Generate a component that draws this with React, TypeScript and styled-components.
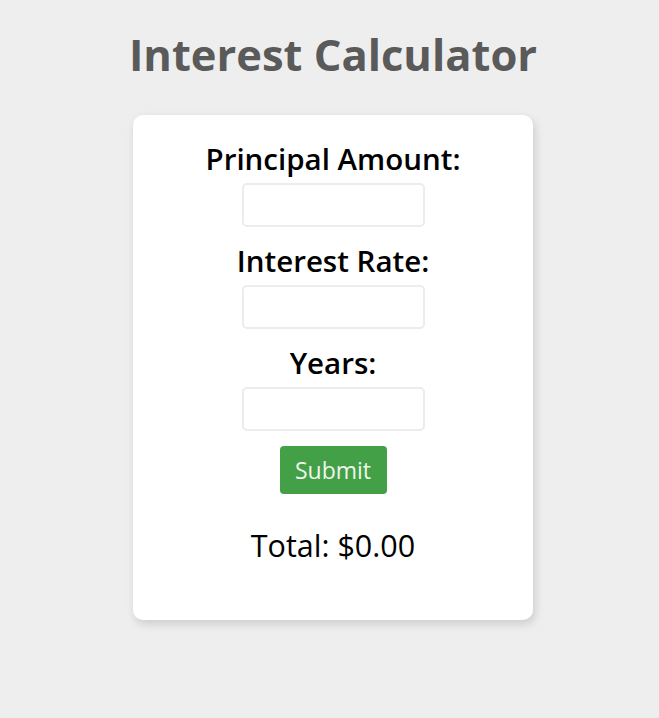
import React from "react";
import styled, { createGlobalStyle } from "styled-components";

const Global = createGlobalStyle`
  html, body { margin: 0; padding: 0; background: #eeeeee; }
  body { font-family: "Open Sans", "Noto Sans", sans-serif; }
`;

const Page = styled.div`
  display: flex;
  flex-direction: column;
  align-items: center;
  padding: 26px 0 40px 7px;
`;

const Title = styled.h1`
  margin: 0 0 31px;
  font-size: 43.5px;
  line-height: 58px;
  font-weight: 700;
  color: #5a5a5a;
`;

const Card = styled.form`
  width: 400px;
  box-sizing: border-box;
  background: #ffffff;
  border-radius: 10px;
  box-shadow: 2px 4px 10px rgba(0, 0, 0, 0.14);
  padding: 26px 0 58px;
  display: flex;
  flex-direction: column;
  align-items: center;
`;

const Field = styled.div`
  display: flex;
  flex-direction: column;
  align-items: center;
  gap: 6px;
  margin-bottom: 16px;
`;

const Label = styled.label`
  font-size: 29.5px;
  line-height: 36px;
  font-weight: 600;
  color: #000;
`;

const Input = styled.input`
  width: 183px;
  height: 44px;
  box-sizing: border-box;
  border: 2px solid #ececec;
  border-radius: 5px;
  background: #fff;
  outline: none;
  font-family: inherit;
  font-size: 18px;
  padding: 0 8px;
`;

const Button = styled.button`
  margin-top: -1px;
  width: 107px;
  height: 48px;
  border: none;
  border-radius: 4px;
  background: #43a047;
  color: #eef6ee;
  font-family: inherit;
  font-size: 23px;
  cursor: pointer;
`;

const Total = styled.p`
  margin: 34px 0 0;
  font-size: 30.5px;
  line-height: 34px;
  color: #000;
`;

export default function App() {
  return (
    <>
      <Global />
      <Page>
        <Title>Interest Calculator</Title>
        <Card onSubmit={(e) => e.preventDefault()}>
          <Field>
            <Label htmlFor="principal">Principal Amount:</Label>
            <Input id="principal" type="text" />
          </Field>
          <Field>
            <Label htmlFor="rate">Interest Rate:</Label>
            <Input id="rate" type="text" />
          </Field>
          <Field>
            <Label htmlFor="years">Years:</Label>
            <Input id="years" type="text" />
          </Field>
          <Button type="submit">Submit</Button>
          <Total>Total: $0.00</Total>
        </Card>
      </Page>
    </>
  );
}
